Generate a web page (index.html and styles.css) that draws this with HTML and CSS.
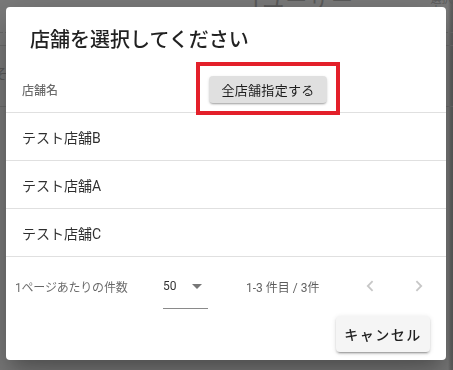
FILE: index.html
```html
<!DOCTYPE html>
<html lang="ja">
<head>
<meta charset="utf-8">
<title>店舗を選択してください</title>
<link rel="stylesheet" href="styles.css">
</head>
<body>
<div class="page">
  <div class="page-top">
    <span class="page-heading">1ユーザー1日1</span>
    <span class="page-meta">選択中</span>
  </div>
  <div class="page-rule"></div>
  <div class="page-mid"><span class="page-left">そ</span></div>
  <div class="page-rule"></div>
</div>

<div class="dialog" role="dialog">
  <h2 class="dialog-title">店舗を選択してください</h2>
  <div class="table">
    <div class="row header">
      <div class="cell name-col">店舗名</div>
      <div class="cell action-col">
        <span class="highlight">
          <button class="btn btn-flat">全店舗指定する</button>
        </span>
      </div>
    </div>
    <div class="row"><div class="cell">テスト店舗B</div></div>
    <div class="row"><div class="cell">テスト店舗A</div></div>
    <div class="row"><div class="cell">テスト店舗C</div></div>
  </div>
  <div class="paginator">
    <div class="pg-label">1ページあたりの件数</div>
    <div class="pg-select">
      <span class="pg-value">50</span>
      <span class="pg-arrow"></span>
    </div>
    <div class="pg-range">1-3 件目 / 3件</div>
    <div class="pg-nav">
      <span class="pg-btn">
        <svg width="8" height="12" viewBox="0 0 8 12"><path d="M6.6 1.2 L1.8 6 L6.6 10.8" fill="none" stroke="#c7c7c7" stroke-width="1.8"/></svg>
      </span>
      <span class="pg-btn">
        <svg width="8" height="12" viewBox="0 0 8 12"><path d="M1.4 1.2 L6.2 6 L1.4 10.8" fill="none" stroke="#c7c7c7" stroke-width="1.8"/></svg>
      </span>
    </div>
  </div>
  <div class="actions">
    <button class="btn btn-raised">キャンセル</button>
  </div>
</div>
</body>
</html>
```
FILE: styles.css
```css
* { box-sizing: border-box; }
html, body { margin: 0; padding: 0; }
body {
  width: 453px;
  height: 370px;
  overflow: hidden;
  font-family: Roboto, "Noto Sans CJK JP", sans-serif;
  background: linear-gradient(to right, #7b7b7b 0, #7b7b7b 448px, #626262 451px, #5c5c5c 453px);
}

/* dimmed background page */
.page { color: #5c5c5c; }
.page-top {
  display: flex;
  align-items: flex-start;
  height: 33px;
  border-bottom: 1px dashed #6a6a6a;
}
.page-heading {
  margin-left: 249px;
  margin-top: -11px;
  font-size: 22px;
  line-height: 24px;
  letter-spacing: 1px;
}
.page-meta {
  margin-left: 76px;
  margin-top: -6px;
  font-size: 11px;
  line-height: 12px;
}
.page-rule { height: 1px; background: #6c6c6c; margin-top: 12px; }
.page-mid { height: 48px; padding-top: 20px; font-size: 14px; line-height: 16px; }
.page-left { margin-left: -6px; }

/* dialog */
.dialog {
  position: fixed;
  left: 6px;
  top: 7px;
  width: 440px;
  height: 353px;
  background: #fff;
  border-radius: 4px;
  box-shadow: 0 11px 15px -7px rgba(0,0,0,.2), 0 24px 38px 3px rgba(0,0,0,.14), 0 9px 46px 8px rgba(0,0,0,.12);
  display: flex;
  flex-direction: column;
}
.dialog-title {
  margin: 0;
  padding: 17px 24px 0;
  height: 59px;
  font-size: 20px;
  line-height: 32px;
  font-weight: 500;
  color: rgba(0,0,0,.87);
  letter-spacing: 0;
}

.table { display: flex; flex-direction: column; }
.row {
  display: flex;
  align-items: center;
  height: 48px;
  border-bottom: 1px solid #e0e0e0;
  font-size: 14px;
  color: rgba(0,0,0,.82);
}
.row.header { height: 47px; }
.cell { padding-left: 16px; }
.name-col {
  width: 203px;
  font-size: 12px;
  font-weight: 500;
  color: rgba(0,0,0,.58);
}
.action-col { padding-left: 0; padding-top: 1px; }

.highlight { position: relative; display: inline-block; }
.highlight::after {
  content: "";
  position: absolute;
  left: -13px;
  right: -13px;
  top: -14px;
  bottom: -12px;
  border: 4px solid #e3202a;
  pointer-events: none;
}

.btn {
  font-family: Roboto, "Noto Sans CJK JP", sans-serif;
  border: none;
  border-radius: 4px;
  color: rgba(0,0,0,.87);
  cursor: pointer;
}
.btn-flat {
  display: block;
  width: 118px;
  height: 27px;
  padding: 0;
  font-size: 13px;
  letter-spacing: .3px;
  background: #e0e0e0;
  box-shadow: 0 2px 2px -1px rgba(0,0,0,.3), 0 1px 3px rgba(0,0,0,.12);
}

.paginator {
  display: flex;
  align-items: center;
  height: 58px;
  padding-left: 9px;
  padding-right: 15px;
  font-size: 12px;
  color: rgba(0,0,0,.6);
}
.pg-label { width: 148px; white-space: nowrap; letter-spacing: -.2px; }
.pg-select {
  width: 45px;
  height: 31px;
  margin-top: 15px;
  display: flex;
  align-items: flex-start;
  padding-top: 1px;
  border-bottom: 1px solid #8a8a8a;
  color: rgba(0,0,0,.82);
  font-size: 12px;
}
.pg-value { width: 29px; line-height: 14px; }
.pg-arrow {
  margin-top: 5px;
  width: 0; height: 0;
  border-left: 5px solid transparent;
  border-right: 5px solid transparent;
  border-top: 5px solid #777;
}
.pg-range { margin-left: 38px; flex: 1; color: rgba(0,0,0,.64); }
.pg-nav { display: flex; gap: 25px; }
.pg-btn {
  width: 24px;
  height: 24px;
  display: flex;
  align-items: center;
  justify-content: center;
}

.actions {
  display: flex;
  justify-content: flex-end;
  padding: 0 16px 8px;
  margin-top: auto;
}
.btn-raised {
  width: 94px;
  height: 36px;
  font-size: 14px;
  letter-spacing: 1.5px;
  background: #f5f5f5;
  box-shadow: 0 3px 1px -2px rgba(0,0,0,.2), 0 2px 2px 0 rgba(0,0,0,.14), 0 1px 5px 0 rgba(0,0,0,.12);
  padding: 0;
  font-weight: 500;
}
```
